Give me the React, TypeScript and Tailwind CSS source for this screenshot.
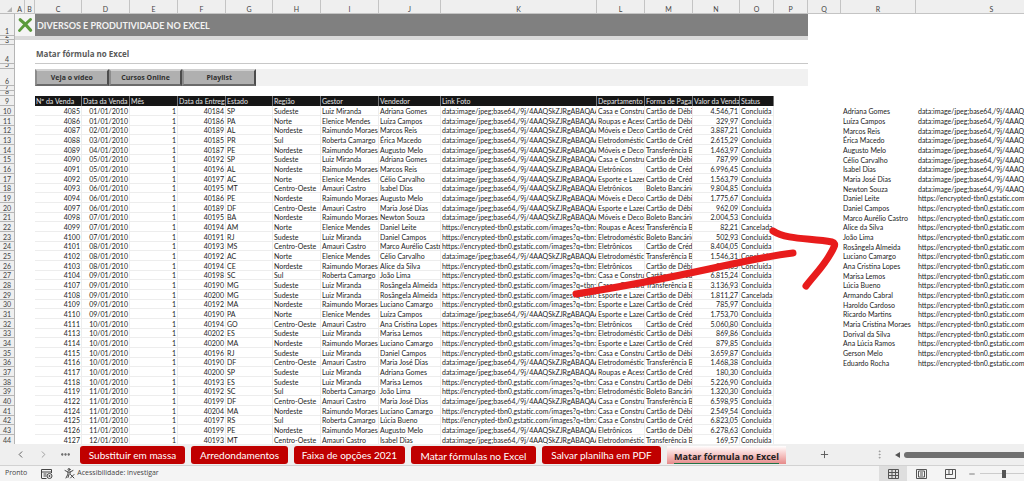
import React from "react";
import { ChevronLeft, ChevronRight, Ellipsis, EllipsisVertical, Plus, Minus } from "lucide-react";

const DATA_LINK = "data:image/jpeg;base64,/9j/4AAQSkZJRgABAQAAAQABAAD";
const HTTP_LINK = "https://encrypted-tbn0.gstatic.com/images?q=tbn:ANd9Gc";

const regions: Record<string, [string, string]> = {
  SE: ["Sudeste", "Luiz Miranda"],
  N: ["Norte", "Elenice Mendes"],
  NE: ["Nordeste", "Raimundo Moraes"],
  S: ["Sul", "Roberta Camargo"],
  CO: ["Centro-Oeste", "Amauri Castro"],
};

const departments: Record<string, string> = {
  C: "Casa e Construção",
  R: "Roupas e Acessórios",
  M: "Móveis e Decoração",
  D: "Eletrodomésticos",
  E: "Eletrônicos",
  L: "Esporte e Lazer",
};

const payments: Record<string, string> = {
  D: "Cartão de Débito",
  C: "Cartão de Crédito",
  T: "Transferência Bancária",
  B: "Boleto Bancário",
};

// sale|day|delivery|state|region|seller|link|department|payment|value|status
const sales = `4085|01|40184|SP|SE|Adriana Gomes|d|C|D|4.546,71
4086|01|40186|PA|N|Luíza Campos|d|R|D|329,97
4087|02|40189|AL|NE|Marcos Reis|d|M|C|3.887,21
4088|03|40185|PR|S|Érica Macedo|d|D|C|2.615,29
4089|04|40187|PE|NE|Augusto Melo|d|M|T|1.463,97
4090|05|40192|SP|SE|Adriana Gomes|d|C|D|787,99
4091|05|40196|AL|NE|Marcos Reis|d|E|C|6.996,45
4092|05|40197|AC|N|Célio Carvalho|d|L|C|1.563,79
4093|06|40195|MT|CO|Isabel Dias|d|E|B|9.804,85
4094|06|40186|PE|NE|Augusto Melo|d|M|D|1.775,67
4097|06|40189|DF|CO|Maria José Dias|d|L|D|962,09
4098|07|40195|BA|NE|Newton Souza|d|M|B|2.004,53
4099|07|40194|AM|N|Daniel Leite|h|R|T|82,21|Cancelada
4100|07|40191|RJ|SE|Daniel Campos|h|D|B|502,93
4101|08|40193|MS|CO|Marco Aurélio Castro|h|E|C|8.404,05
4102|08|40192|AC|N|Célio Carvalho|d|D|T|1.546,31
4103|08|40194|CE|NE|Alice da Silva|h|E|D|883,65
4104|09|40198|SC|S|João Lima|h|C|C|6.815,24
4107|09|40190|MG|SE|Rosângela Almeida|h|C|T|3.136,93
4108|09|40200|MG|SE|Rosângela Almeida|h|L|D|1.811,27|Cancelada
4109|09|40192|MA|NE|Luciano Camargo|h|L|C|785,97
4110|09|40190|PA|N|Luíza Campos|d|L|C|1.753,70
4111|10|40194|GO|CO|Ana Cristina Lopes|h|E|C|5.060,80
4113|10|40202|ES|SE|Marisa Lemos|h|D|D|869,86
4114|10|40200|MA|NE|Luciano Camargo|h|L|C|879,85
4115|10|40196|RJ|SE|Daniel Campos|h|C|D|3.659,87
4116|10|40190|DF|CO|Maria José Dias|d|D|T|1.468,38
4117|10|40200|SP|SE|Adriana Gomes|d|R|C|180,30
4118|10|40193|ES|SE|Marisa Lemos|h|C|D|5.226,90
4119|11|40192|SC|S|João Lima|h|D|B|1.320,30
4122|11|40199|DF|CO|Maria José Dias|d|C|T|6.598,95
4124|11|40204|MA|NE|Luciano Camargo|h|C|D|2.549,54
4125|11|40197|RS|S|Lúcia Bueno|h|C|C|6.823,05
4126|11|40199|PE|NE|Augusto Melo|d|E|D|6.278,63
4127|12|40193|MT|CO|Isabel Dias|d|D|T|169,57`
  .split("\n")
  .map((line) => line.split("|"));

const people = [
  "Adriana Gomes", "Luíza Campos", "Marcos Reis", "Érica Macedo", "Augusto Melo", "Célio Carvalho",
  "Isabel Dias", "Maria José Dias", "Newton Souza", "Daniel Leite", "Daniel Campos",
  "Marco Aurélio Castro", "Alice da Silva", "João Lima", "Rosângela Almeida", "Luciano Camargo",
  "Ana Cristina Lopes", "Marisa Lemos", "Lúcia Bueno", "Armando Cabral", "Haroldo Cardoso",
  "Ricardo Martins", "Maria Cristina Moraes", "Dorival da Silva", "Ana Lúcia Ramos", "Gerson Melo",
  "Eduardo Rocha",
];

const columns: [string, string][] = [
  ["A", "w-[10px]"], ["B", "w-[10px]"], ["C", "w-[47px]"], ["D", "w-[48px]"], ["E", "w-[48px]"],
  ["F", "w-[48px]"], ["G", "w-[47px]"], ["H", "w-[48px]"], ["I", "w-[58px]"], ["J", "w-[62px]"],
  ["K", "w-[156px]"], ["L", "w-[48px]"], ["M", "w-[48px]"], ["N", "w-[47px]"], ["O", "w-[34px]"],
  ["P", "w-[34px]"], ["Q", "w-[33px]"], ["R", "w-[75px]"], ["S", ""],
];

const fields = [
  "Nº da Venda", "Data da Venda", "Mês", "Data da Entrega", "Estado", "Região", "Gestor",
  "Vendedor", "Link Foto", "Departamento", "Forma de Pagamento", "Valor da Venda", "Status",
];

// The height leaves one pixel of the row for the rule under it.
function RowHead({ n, height }: { n: number; height: string }) {
  return (
    <th scope="row" className="border-r border-b border-[#b5b5b5] bg-[#efefef] p-0 font-normal">
      <div className={`flex items-end justify-center overflow-hidden leading-[8px] text-[#444] ${height}`}>{n}</div>
    </th>
  );
}

function Cell({ children, right, grid = true }: { children?: React.ReactNode; right?: boolean; grid?: boolean }) {
  return (
    <td className={`p-0 align-middle ${grid ? "border-r border-b border-[#ededed]" : ""} ${right ? "text-right" : ""}`}>
      <div className="overflow-x-clip px-px leading-[8px] whitespace-nowrap">{children}</div>
    </td>
  );
}

function MacroButton({ children }: { children: React.ReactNode }) {
  return (
    <button className="flex h-[17px] flex-1 items-center justify-center border-2 border-t-[#d0d0d0] border-r-[#4c4c4c] border-b-[#6a6a6a] border-l-[#8c8c8c] bg-[#b0b0b0] font-['Open_Sans',sans-serif] text-[7px] leading-none font-bold text-[#303030]">
      {children}
    </button>
  );
}

function Sheet() {
  return (
    <table className="w-[calc(100%+44px)] table-fixed border-separate border-spacing-0 font-['Lato','Open_Sans',sans-serif] text-[7px] text-[#1c1c1c]">
      <colgroup>
        <col className="w-[15px]" />
        {columns.map(([letter, width]) => (
          <col key={letter} className={width} />
        ))}
      </colgroup>
      <thead>
        <tr className="h-[14px] bg-[#efefef] text-[#444]">
          <th className="border-b border-[#bdbdbd] p-0">
            <svg viewBox="0 0 15 13" className="block h-[13px] w-[15px]" aria-hidden="true">
              <path d="M12 7v5H7z" fill="#b4b4b4" />
            </svg>
          </th>
          {columns.map(([letter]) => (
            <th key={letter} scope="col" className="border-r border-b border-[#c4c4c4] p-0 align-bottom leading-[8px] font-normal">
              {letter}
            </th>
          ))}
        </tr>
      </thead>
      <tbody>
        <tr>
          <RowHead n={1} height="h-[21px]" />
          <td colSpan={2} className="bg-[#f4f4f4] p-0">
            <svg viewBox="0 0 20 20" className="mx-auto block h-[16px] w-[16px]" aria-label="Excel">
              <path d="M4 3.500Q10 8 17 16.500" fill="none" stroke="#5b9a3c" strokeWidth="4" strokeLinecap="round" />
              <path d="M17 3Q10 9 3 17" fill="none" stroke="#5b9a3c" strokeWidth="3.400" strokeLinecap="round" />
            </svg>
          </td>
          <td colSpan={14} className="bg-[#808080] px-[2px] py-0 text-[9px] leading-none font-bold text-[#f2f2f2]">
            DIVERSOS E PRODUTIVIDADE NO EXCEL
          </td>
        </tr>
        <tr>
          <RowHead n={2} height="h-[3px]" />
          <td colSpan={16} className="bg-[#d9d9d9] p-0" />
        </tr>
        <tr>
          <RowHead n={3} height="h-[4px]" />
        </tr>
        <tr>
          <RowHead n={4} height="h-[18px]" />
          <td colSpan={2} className="p-0" />
          <td colSpan={14} className="border-b border-[#c8c8c8] px-px py-0 font-['Open_Sans',sans-serif] text-[8px] leading-none font-bold text-[#595959]">
            Matar fórmula no Excel
          </td>
        </tr>
        <tr>
          <RowHead n={5} height="h-[4px]" />
        </tr>
        <tr>
          <RowHead n={6} height="h-[16px]" />
          <td colSpan={2} className="p-0" />
          <td colSpan={14} className="bg-[#f1f1f1] p-0">
            <div className="flex w-[221px]">
              <MacroButton>Veja o vídeo</MacroButton>
              <MacroButton>Cursos Online</MacroButton>
              <MacroButton>Playlist</MacroButton>
            </div>
          </td>
        </tr>
        <tr>
          <RowHead n={7} height="h-[4px]" />
        </tr>
        <tr>
          <RowHead n={8} height="h-[4px]" />
        </tr>
        <tr>
          <RowHead n={9} height="h-[9px]" />
          <td colSpan={2} className="p-0" />
          {fields.map((field) => (
            <th key={field} scope="col" className="border-r border-[#777] bg-[#161616] p-0 text-left font-normal text-[#e4e4e4]">
              <div className="overflow-x-clip px-px leading-[8px] whitespace-nowrap">{field}</div>
            </th>
          ))}
        </tr>
        {sales.map(([sale, day, delivery, state, region, seller, link, dept, pay, value, status], i) => (
          <tr key={sale}>
            <RowHead n={i + 10} height={i % 3 === 2 ? "h-[8px]" : "h-[9px]"} />
            <Cell grid={false} />
            <Cell grid={false} />
            <Cell right>{sale}</Cell>
            <Cell right>{day}/01/2010</Cell>
            <Cell right>1</Cell>
            <Cell right>{delivery}</Cell>
            <Cell>{state}</Cell>
            <Cell>{regions[region][0]}</Cell>
            <Cell>{regions[region][1]}</Cell>
            <Cell>{seller}</Cell>
            <Cell>{link === "d" ? DATA_LINK : HTTP_LINK}</Cell>
            <Cell>{departments[dept]}</Cell>
            <Cell>{payments[pay]}</Cell>
            <Cell right>{value}</Cell>
            <Cell>{status ?? "Concluída"}</Cell>
            <Cell grid={false} />
            <Cell grid={false} />
            <Cell grid={false}>
              <span className="pl-px">{people[i]}</span>
            </Cell>
            <Cell grid={false}>
              <span className="pl-px">{i < 9 ? DATA_LINK : i < people.length ? HTTP_LINK : ""}</span>
            </Cell>
          </tr>
        ))}
      </tbody>
    </table>
  );
}

const tabs: [string, string][] = [
  ["Substituir em massa", "w-[105px]"],
  ["Arredondamentos", "w-[97px]"],
  ["Faixa de opções 2021", "w-[111px]"],
  ["Matar fórmulas no Excel", "w-[125px] pt-[3px]"],
  ["Salvar planilha em PDF", "w-[119px]"],
];

function TabBar() {
  return (
    <nav className="flex h-[22px] shrink-0 items-center border-b border-[#d2d2d2] bg-[#efefef] text-[#555]">
      <button aria-label="Anterior" className="ml-[15px]"><ChevronLeft size={11} /></button>
      <button aria-label="Próxima" className="ml-[12px] text-[#999]"><ChevronRight size={11} /></button>
      <button aria-label="Mais planilhas" className="ml-[11px]"><Ellipsis size={11} strokeWidth={3} /></button>
      <div className="ml-[9px] flex gap-[6px] font-['Lato','Open_Sans',sans-serif]">
        {tabs.map(([name, width]) => (
          <button key={name} className={`h-[18px] rounded-[3px] bg-[#c00000] text-[10px] leading-none whitespace-nowrap text-white ${width}`}>
            {name}
          </button>
        ))}
        <button className="h-[18px] w-[119px] bg-linear-to-b from-white to-[#e58a8a] pt-[3px] font-['Open_Sans',sans-serif] text-[9px] leading-none font-bold whitespace-nowrap text-[#222]">
          <span className="border-b border-[#217346]">Matar fórmula no Excel</span>
        </button>
      </div>
      <button aria-label="Nova planilha" className="ml-[33px]"><Plus size={11} /></button>
      <EllipsisVertical size={11} className="ml-auto text-[#999]" />
      <div className="ml-[10px] flex w-[129px] items-center gap-1">
        <svg viewBox="0 0 5 6" className="h-[6px] w-[5px]" aria-hidden="true"><path d="M5 0v6L0 3z" fill="#555" /></svg>
        <div className="h-[6px] flex-1 rounded-l-full bg-[#707070]" />
      </div>
    </nav>
  );
}

function StatusBar() {
  return (
    <footer className="flex h-[15px] shrink-0 items-center bg-[#f4f4f4] pl-[5px] text-[7px] text-[#444]">
      <span>Pronto</span>
      <svg viewBox="0 0 12 10" className="ml-[14px] h-[10px] w-[12px]" fill="none" stroke="#444" aria-hidden="true">
        <path d="M.5 9V.5h10V4M.5 3h10M2.500 5h3M2.500 7h3M.5 9.500h5" />
        <circle cx="8.500" cy="7" r="2.500" />
        <circle cx="8.500" cy="7" r=".6" fill="#444" />
      </svg>
      <svg viewBox="0 0 11 11" className="ml-[11px] h-[11px] w-[11px]" fill="none" stroke="#444" strokeLinecap="round" aria-hidden="true">
        <circle cx="5" cy="1.500" r="1" />
        <path d="M1 2.500 4 4v2L2 10M9 2.500 6 4v2M4 4h2M5 6.500l-1 3M6.500 6.500l3.500 3.500M10 6.500 6.500 10" />
      </svg>
      <span className="ml-[2px]">Acessibilidade: investigar</span>
      <div className="ml-auto flex h-full w-[145px] items-center">
        <button aria-label="Normal" className="flex h-full w-[28px] items-center justify-center bg-[#dedede]">
          <svg viewBox="0 0 11 10" className="h-[10px] w-[11px]" fill="none" stroke="#555"><path d="M.5.500h10v9H.5zM.5 3.500h10M.5 6.500h10M4 .5v9M7.500.5v9" /></svg>
        </button>
        <button aria-label="Layout da Página" className="flex h-full w-[29px] items-center justify-center">
          <svg viewBox="0 0 11 10" className="h-[10px] w-[11px]" fill="none" stroke="#555"><path d="M.5.500h10v9H.5zM2.500 2h6v6h-6zM4 4h3M4 6h3" /></svg>
        </button>
        <button aria-label="Quebra de Página" className="flex h-full w-[28px] items-center justify-center">
          <svg viewBox="0 0 11 10" className="h-[10px] w-[11px]" fill="none" stroke="#555"><path d="M.5.500h10v9H.5zM.5 5.500h7v-5M4 .5v5" /></svg>
        </button>
        <button aria-label="Reduzir" className="ml-1"><Minus size={8} /></button>
        <div className="ml-1 flex flex-1 items-center">
          <div className="h-px w-[22px] bg-[#ccc]" />
          <div className="h-[8px] w-[4px] bg-[#555]" />
          <div className="h-px flex-1 bg-[#ccc]" />
        </div>
      </div>
    </footer>
  );
}

export default function App() {
  return (
    <div className="flex h-screen flex-col overflow-hidden bg-white font-['Open_Sans','Noto_Sans',sans-serif]">
      <main className="relative min-h-0 flex-1 overflow-hidden">
        <Sheet />
        <svg
          viewBox="0 0 280 80"
          className="pointer-events-none absolute top-[220px] left-[565px] h-[80px] w-[280px]"
          fill="none"
          stroke="#e81c1c"
          strokeWidth="8"
          strokeLinecap="round"
          strokeLinejoin="round"
          aria-hidden="true"
        >
          <path d="M11 74Q80 63 144 49T228 33" strokeWidth="7" />
          <path d="M208 11C222 20 245 18 267 22Q271 23 269 27C262 43 251 53 241 66" strokeWidth="7" />
        </svg>
      </main>
      <TabBar />
      <StatusBar />
    </div>
  );
}
